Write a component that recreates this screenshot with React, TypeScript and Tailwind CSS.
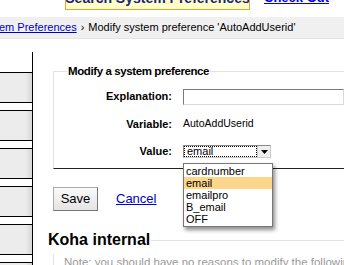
import React from "react";

const font = { fontFamily: '"Liberation Sans", Arial, Helvetica, sans-serif' };

function SideItem() {
  return (
    <div className="flex flex-col">
      <div className="h-[31px] border-y border-black bg-gradient-to-r from-[#ececec] from-80% to-[#d6d6d6]" />
      <div className="h-[7px]" />
    </div>
  );
}

export default function App() {
  const options = ["cardnumber", "email", "emailpro", "B_email", "OFF"];
  return (
    <div className="relative h-[265px] w-[344px] overflow-hidden bg-white text-black" style={font}>
      {/* header strip */}
      <div className="flex h-[17px] items-start overflow-hidden">
        <div className="ml-[65px] -mt-[12px] flex h-[22px] w-[185px] shrink-0 items-end justify-center overflow-hidden whitespace-nowrap border border-[#f0a030] bg-[#ffffc8] pb-[4px] text-[14px] font-bold leading-none text-[#1a237e]">
          Search System Preferences
        </div>
        <a className="-mt-[9px] ml-[14px] whitespace-nowrap text-[13px] leading-[13px] font-bold text-[#0000ee] underline">Check Out</a>
      </div>

      {/* breadcrumbs */}
      <div className="flex h-[22px] items-center border-b border-[#e4e4e4] bg-[#f0f0f0] text-[11px] whitespace-nowrap">
        <a className="-ml-[1px] text-[#0000cc] underline">em Preferences</a>
        <span className="mx-[4px]">›</span>
        <span>Modify system preference 'AutoAddUserid'</span>
      </div>

      <div className="flex">
        {/* left nav */}
        <div className="mt-[13px] flex w-[33px] shrink-0 flex-col border-r border-black pt-[20px]">
          <SideItem />
          <SideItem />
          <SideItem />
          <SideItem />
          <SideItem />
          <SideItem />
        </div>

        {/* content */}
        <div className="ml-[20px] min-w-0 flex-1">
          <fieldset className="mt-[24px] border-l border-t border-b border-l-[#e2e2e2] border-t-[#e2e2e2] border-b-[#222] pb-[8px]">
            <legend className="ml-[13px] px-[1px] text-[11.5px] font-bold tracking-[-0.4px]">Modify a system preference</legend>
            <div className="mt-[8px] grid grid-cols-[118px_1fr] items-center gap-x-[11px] gap-y-[11px] text-[11px]">
              <div className="text-right font-bold">Explanation:</div>
              <div className="h-[16px] border border-[#7a7a7a] border-b-[#dadada] border-r-[#dadada]" />
              <div className="text-right font-bold">Variable:</div>
              <div className="text-[10.5px]">AutoAddUserid</div>
              <div className="text-right font-bold">Value:</div>
              <div className="flex h-[13px] w-[88px] items-stretch border border-[#888] border-r-[#ccc] border-b-[#ccc]">
                <div className="flex flex-1 items-center border border-dotted border-black px-[2px] leading-none">email</div>
                <div className="flex w-[13px] items-center justify-center border-l border-[#ccc] bg-[#eee]">
                  <svg width="7" height="4" viewBox="0 0 7 4"><path d="M0 0h7L3.5 4z" fill="#000" /></svg>
                </div>
              </div>
            </div>
          </fieldset>

          <div className="mt-[18px] flex items-center">
            <button className="h-[24px] w-[45px] border border-[#aaa] border-b-[#777] border-r-[#777] bg-gradient-to-b from-[#fafafa] to-[#e4e4e4] text-[13px]">
              Save
            </button>
            <a className="ml-[18px] text-[13px] text-[#0000cc] underline">Cancel</a>
          </div>

          <div className="relative mt-[21px]">
            <h3 className="-ml-[5px] text-[16px] leading-none font-bold">Koha internal</h3>
            <div className="absolute top-[8px] left-[98px] right-0 border-t border-[#e2e2e2]" />
            <div className="mt-[6px] border-l border-[#e2e2e2] pl-[10px] text-[11.5px] whitespace-nowrap text-[#999]">
              Note: you should have no reasons to modify the following
            </div>
          </div>
        </div>
      </div>

      {/* open select list */}
      <div className="absolute top-[163px] left-[183px] w-[90px] border border-[#777] bg-white py-[1px] text-[11px] leading-[12px] shadow-[2px_3px_4px_rgba(0,0,0,0.45)]">
        {options.map((o) => (
          <div key={o} className={o === "email" ? "bg-[#fcd68a] px-[2px]" : "px-[2px]"}>
            {o}
          </div>
        ))}
      </div>
    </div>
  );
}
